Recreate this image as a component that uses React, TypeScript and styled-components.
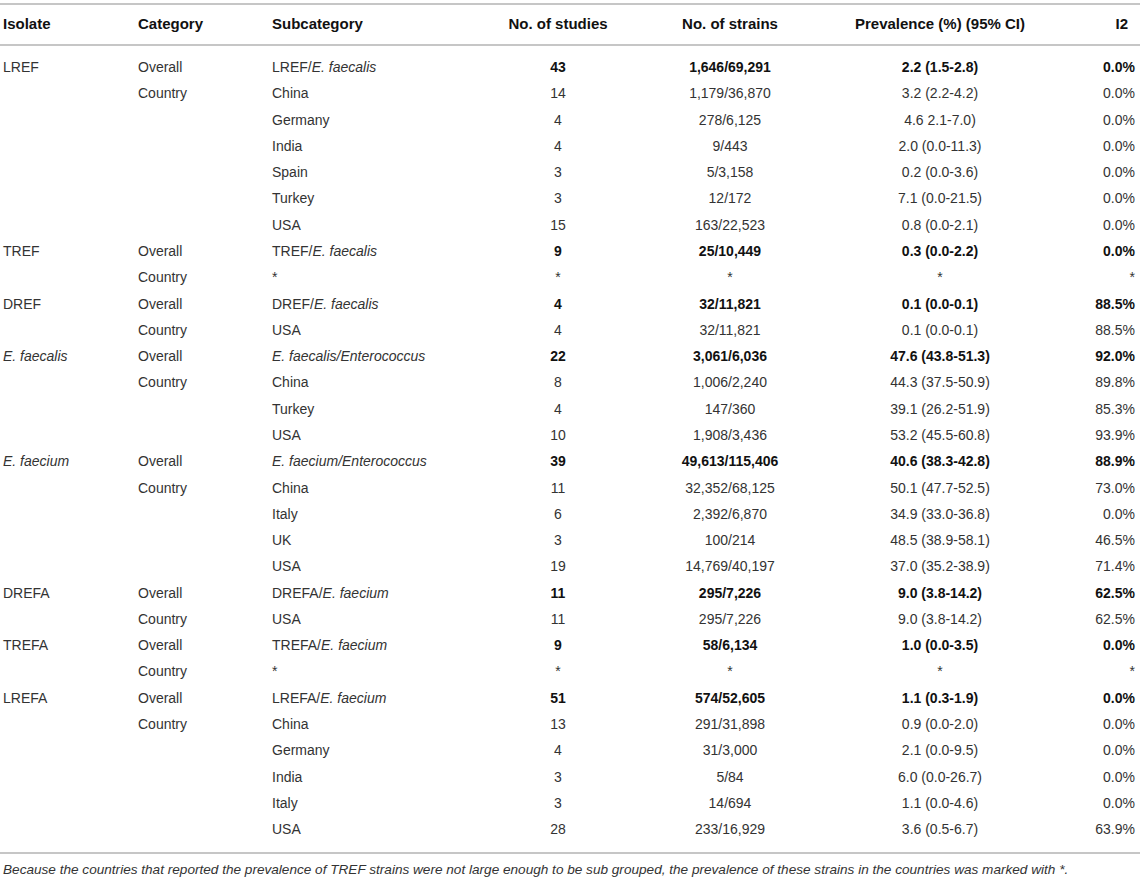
import React from "react";
import styled, { createGlobalStyle } from "styled-components";

const GlobalStyle = createGlobalStyle`
	* {
		box-sizing: border-box;
	}
	body {
		margin: 0;
		background: #fff;
		font-family: "Liberation Sans", Arial, sans-serif;
		color: #333;
	}
`;

const Wrapper = styled.div`
	width: 1143px;
	padding-top: 3px;
`;

const Table = styled.table`
	width: 1140px;
	border-collapse: collapse;
	table-layout: fixed;
	font-size: 14px;
`;

const HeadCell = styled.th<{ $align?: string; $width: number }>`
	width: ${p => p.$width}px;
	text-align: ${p => p.$align || "left"};
	font-size: 15px;
	font-weight: bold;
	color: #111;
	padding: 11px 3px 12px;
	line-height: 16px;
	border-top: 2px solid #c6c6c6;
	border-bottom: 2px solid #c6c6c6;

	&:last-child {
		padding-right: 12px;
	}
`;

const Row = styled.tr`
	&:first-child td {
		padding-top: 13px;
	}
	&:last-child td {
		padding-bottom: 15px;
		border-bottom: 2px solid #c6c6c6;
	}
`;

const Cell = styled.td<{ $align?: string; $bold?: boolean }>`
	text-align: ${p => p.$align || "left"};
	font-weight: ${p => (p.$bold ? "bold" : "normal")};
	color: ${p => (p.$bold ? "#111" : "#333")};
	padding: 5px 3px;
	line-height: 16.28px;
	white-space: nowrap;

	&:last-child {
		padding-right: 5px;
	}
`;

const Note = styled.p`
	margin: 8px 0 0;
	padding-left: 3px;
	font-size: 13.6px;
	font-style: italic;
	color: #333;
`;

type Item = {
	isolate?: React.ReactNode;
	category: string;
	sub: React.ReactNode;
	studies: string;
	strains: string;
	prev: string;
	i2: string;
	bold?: boolean;
};

const I = styled.i``;

const rows: Item[] = [
	{ isolate: "LREF", category: "Overall", sub: <>LREF/<I>E. faecalis</I></>, studies: "43", strains: "1,646/69,291", prev: "2.2 (1.5-2.8)", i2: "0.0%", bold: true },
	{ category: "Country", sub: "China", studies: "14", strains: "1,179/36,870", prev: "3.2 (2.2-4.2)", i2: "0.0%" },
	{ category: "", sub: "Germany", studies: "4", strains: "278/6,125", prev: "4.6 2.1-7.0)", i2: "0.0%" },
	{ category: "", sub: "India", studies: "4", strains: "9/443", prev: "2.0 (0.0-11.3)", i2: "0.0%" },
	{ category: "", sub: "Spain", studies: "3", strains: "5/3,158", prev: "0.2 (0.0-3.6)", i2: "0.0%" },
	{ category: "", sub: "Turkey", studies: "3", strains: "12/172", prev: "7.1 (0.0-21.5)", i2: "0.0%" },
	{ category: "", sub: "USA", studies: "15", strains: "163/22,523", prev: "0.8 (0.0-2.1)", i2: "0.0%" },
	{ isolate: "TREF", category: "Overall", sub: <>TREF/<I>E. faecalis</I></>, studies: "9", strains: "25/10,449", prev: "0.3 (0.0-2.2)", i2: "0.0%", bold: true },
	{ category: "Country", sub: "*", studies: "*", strains: "*", prev: "*", i2: "*" },
	{ isolate: "DREF", category: "Overall", sub: <>DREF/<I>E. faecalis</I></>, studies: "4", strains: "32/11,821", prev: "0.1 (0.0-0.1)", i2: "88.5%", bold: true },
	{ category: "Country", sub: "USA", studies: "4", strains: "32/11,821", prev: "0.1 (0.0-0.1)", i2: "88.5%" },
	{ isolate: <I>E. faecalis</I>, category: "Overall", sub: <I>E. faecalis/Enterococcus</I>, studies: "22", strains: "3,061/6,036", prev: "47.6 (43.8-51.3)", i2: "92.0%", bold: true },
	{ category: "Country", sub: "China", studies: "8", strains: "1,006/2,240", prev: "44.3 (37.5-50.9)", i2: "89.8%" },
	{ category: "", sub: "Turkey", studies: "4", strains: "147/360", prev: "39.1 (26.2-51.9)", i2: "85.3%" },
	{ category: "", sub: "USA", studies: "10", strains: "1,908/3,436", prev: "53.2 (45.5-60.8)", i2: "93.9%" },
	{ isolate: <I>E. faecium</I>, category: "Overall", sub: <I>E. faecium/Enterococcus</I>, studies: "39", strains: "49,613/115,406", prev: "40.6 (38.3-42.8)", i2: "88.9%", bold: true },
	{ category: "Country", sub: "China", studies: "11", strains: "32,352/68,125", prev: "50.1 (47.7-52.5)", i2: "73.0%" },
	{ category: "", sub: "Italy", studies: "6", strains: "2,392/6,870", prev: "34.9 (33.0-36.8)", i2: "0.0%" },
	{ category: "", sub: "UK", studies: "3", strains: "100/214", prev: "48.5 (38.9-58.1)", i2: "46.5%" },
	{ category: "", sub: "USA", studies: "19", strains: "14,769/40,197", prev: "37.0 (35.2-38.9)", i2: "71.4%" },
	{ isolate: "DREFA", category: "Overall", sub: <>DREFA/<I>E. faecium</I></>, studies: "11", strains: "295/7,226", prev: "9.0 (3.8-14.2)", i2: "62.5%", bold: true },
	{ category: "Country", sub: "USA", studies: "11", strains: "295/7,226", prev: "9.0 (3.8-14.2)", i2: "62.5%" },
	{ isolate: "TREFA", category: "Overall", sub: <>TREFA/<I>E. faecium</I></>, studies: "9", strains: "58/6,134", prev: "1.0 (0.0-3.5)", i2: "0.0%", bold: true },
	{ category: "Country", sub: "*", studies: "*", strains: "*", prev: "*", i2: "*" },
	{ isolate: "LREFA", category: "Overall", sub: <>LREFA/<I>E. faecium</I></>, studies: "51", strains: "574/52,605", prev: "1.1 (0.3-1.9)", i2: "0.0%", bold: true },
	{ category: "Country", sub: "China", studies: "13", strains: "291/31,898", prev: "0.9 (0.0-2.0)", i2: "0.0%" },
	{ category: "", sub: "Germany", studies: "4", strains: "31/3,000", prev: "2.1 (0.0-9.5)", i2: "0.0%" },
	{ category: "", sub: "India", studies: "3", strains: "5/84", prev: "6.0 (0.0-26.7)", i2: "0.0%" },
	{ category: "", sub: "Italy", studies: "3", strains: "14/694", prev: "1.1 (0.0-4.6)", i2: "0.0%" },
	{ category: "", sub: "USA", studies: "28", strains: "233/16,929", prev: "3.6 (0.5-6.7)", i2: "63.9%" },
];

const App: React.FC = () => {
	return (
		<Wrapper>
			<GlobalStyle />
			<Table>
				<thead>
					<tr>
						<HeadCell $width={135}>Isolate</HeadCell>
						<HeadCell $width={134}>Category</HeadCell>
						<HeadCell $width={211}>Subcategory</HeadCell>
						<HeadCell $width={156} $align="center">No. of studies</HeadCell>
						<HeadCell $width={188} $align="center">No. of strains</HeadCell>
						<HeadCell $width={232} $align="center">Prevalence (%) (95% CI)</HeadCell>
						<HeadCell $width={84} $align="right">I2</HeadCell>
					</tr>
				</thead>
				<tbody>
					{rows.map((r, i) => (
						<Row key={i}>
							<Cell>{r.isolate}</Cell>
							<Cell>{r.category}</Cell>
							<Cell>{r.sub}</Cell>
							<Cell $align="center" $bold={r.bold}>{r.studies}</Cell>
							<Cell $align="center" $bold={r.bold}>{r.strains}</Cell>
							<Cell $align="center" $bold={r.bold}>{r.prev}</Cell>
							<Cell $align="right" $bold={r.bold}>{r.i2}</Cell>
						</Row>
					))}
				</tbody>
			</Table>
			<Note>
				Because the countries that reported the prevalence of TREF strains were not large enough to be sub grouped, the prevalence of these strains in the countries was marked with *.
			</Note>
		</Wrapper>
	);
};

export default App;
